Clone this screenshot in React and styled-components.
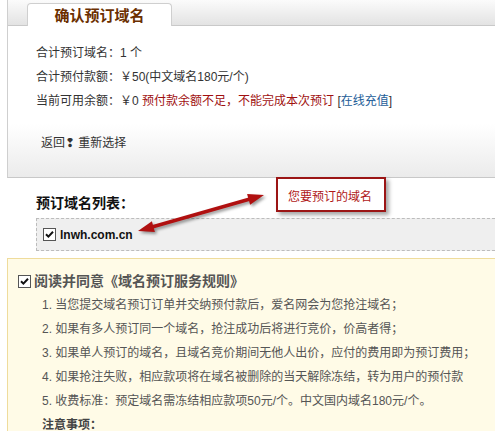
import React from "react";
import styled, { createGlobalStyle } from "styled-components";

const GlobalStyle = createGlobalStyle`
  body {
    margin: 0;
    background: #fff;
    font-family: "Liberation Sans", "Noto Sans CJK SC", sans-serif;
    font-size: 12px;
    color: #333;
  }
`;

const Page = styled.div`
  width: 495px;
  height: 431px;
  overflow: hidden;
  padding-left: 7px;
  box-sizing: border-box;
`;

const ConfirmPanel = styled.div`
  border-left: 1px solid #cfcfcf;
  border-bottom: 1px solid #c8c8c8;
  background: linear-gradient(#fff 70%, #ebebeb);
`;

const TabBar = styled.div`
  height: 25px;
  display: flex;
  align-items: flex-end;
  padding-left: 19px;
  background: linear-gradient(#fbfbfb, #e3e3e3);
  border-bottom: 1px solid #c9c9c9;
`;

const Tab = styled.div`
  width: 145px;
  height: 23px;
  box-sizing: border-box;
  margin-bottom: -1px;
  background: #fff;
  border: 1px solid #cfcfcf;
  border-bottom: none;
  border-radius: 4px 4px 0 0;
  color: #6b2f00;
  font-size: 15px;
  font-weight: bold;
  text-align: center;
  line-height: 24px;
`;

const Info = styled.div`
  padding: 15px 0 22px 28px;
`;

const Line = styled.div`
  line-height: 24px;
`;

const Warn = styled.span`
  color: #a01010;
`;

const Link = styled.a`
  color: #1d5d98;
  text-decoration: none;
`;

const Back = styled.div`
  margin-top: 18px;
  padding-left: 5px;
  line-height: 24px;
`;

const ListSection = styled.div`
  position: relative;
  padding: 15px 0 0 29px;
`;

const ListTitle = styled.div`
  font-size: 14px;
  font-weight: bold;
  color: #111;
  line-height: 20px;
  margin-bottom: 5px;
`;

const DomainBox = styled.div`
  height: 31px;
  display: flex;
  align-items: center;
  gap: 4px;
  padding-left: 6px;
  background: #efefef;
  border: 1px dashed #bcbcbc;
  border-right: none;
`;

const Domain = styled.span`
  font-size: 12px;
  font-weight: bold;
  color: #111;
`;

const Box = styled.span`
  width: 13px;
  height: 13px;
  box-sizing: border-box;
  display: inline-flex;
  align-items: center;
  justify-content: center;
  border: 1px solid #555;
  background: #fff;
  flex-shrink: 0;
`;

const Callout = styled.div`
  position: absolute;
  left: 269px;
  top: -1px;
  width: 110px;
  height: 35px;
  box-sizing: border-box;
  border: 2px solid #9b1515;
  background: #fff;
  box-shadow: 3px 3px 4px rgba(0, 0, 0, 0.35);
  color: #b01818;
  padding: 10px 0 0 10px;
  line-height: 16px;
`;

const Arrow = styled.svg`
  position: absolute;
  left: 113px;
  top: 2px;
  filter: drop-shadow(2px 2px 1.5px rgba(0, 0, 0, 0.4));
`;

const RulesPanel = styled.div`
  margin-top: 7px;
  background: #fffbe7;
  border: 1px solid #efdc9c;
  border-right: none;
  padding: 12px 0 0 10px;
  height: 200px;
`;

const RulesHead = styled.div`
  display: flex;
  align-items: center;
  gap: 3px;
  font-size: 14px;
  font-weight: bold;
  color: #555;
  line-height: 20px;
`;

const Rules = styled.div`
  padding-left: 24px;
  margin-top: 2px;
  color: #555;
`;

const Rule = styled.div`
  line-height: 24px;
`;

const Notice = styled.div`
  line-height: 24px;
  font-weight: bold;
  color: #444;
`;

const CheckBox = () => (
  <Box>
    <svg width="9" height="9" viewBox="0 0 9 9">
      <path d="M1 4.2 L3.4 6.6 L8 1.8" fill="none" stroke="#111" strokeWidth="2" />
    </svg>
  </Box>
);

const rules = [
  "1. 当您提交域名预订订单并交纳预付款后，爱名网会为您抢注域名；",
  "2. 如果有多人预订同一个域名，抢注成功后将进行竞价，价高者得；",
  "3. 如果单人预订的域名，且域名竞价期间无他人出价，应付的费用即为预订费用；",
  "4. 如果抢注失败，相应款项将在域名被删除的当天解除冻结，转为用户的预付款",
  "5. 收费标准：预定域名需冻结相应款项50元/个。中文国内域名180元/个。",
];

export default function App() {
  return (
    <Page>
      <GlobalStyle />
      <ConfirmPanel>
        <TabBar>
          <Tab>确认预订域名</Tab>
        </TabBar>
        <Info>
          <Line>合计预订域名：1 个</Line>
          <Line>合计预付款额：￥50(中文域名180元/个)</Line>
          <Line>
            当前可用余额：￥0 <Warn>预付款余额不足，不能完成本次预订</Warn>{" "}
            [<Link href="#">在线充值</Link>]
          </Line>
          <Back>返回❢ 重新选择</Back>
        </Info>
      </ConfirmPanel>

      <ListSection>
        <ListTitle>预订域名列表：</ListTitle>
        <DomainBox>
          <CheckBox />
          <Domain>lnwh.com.cn</Domain>
        </DomainBox>
        <Callout>您要预订的域名</Callout>
        <Arrow width="160" height="65" viewBox="0 0 160 65">
          <line x1="32" y1="47" x2="130" y2="19" stroke="#b01010" strokeWidth="3.5" />
          <polygon points="18,51 34.9,51.9 31.9,41.3" fill="#b01010" />
          <polygon points="144,15 130.1,24.7 127.1,14.1" fill="#b01010" />
        </Arrow>
      </ListSection>

      <RulesPanel>
        <RulesHead>
          <CheckBox />
          阅读并同意《域名预订服务规则》
        </RulesHead>
        <Rules>
          {rules.map((r) => (
            <Rule key={r}>{r}</Rule>
          ))}
          <Notice>注意事项：</Notice>
        </Rules>
      </RulesPanel>
    </Page>
  );
}
